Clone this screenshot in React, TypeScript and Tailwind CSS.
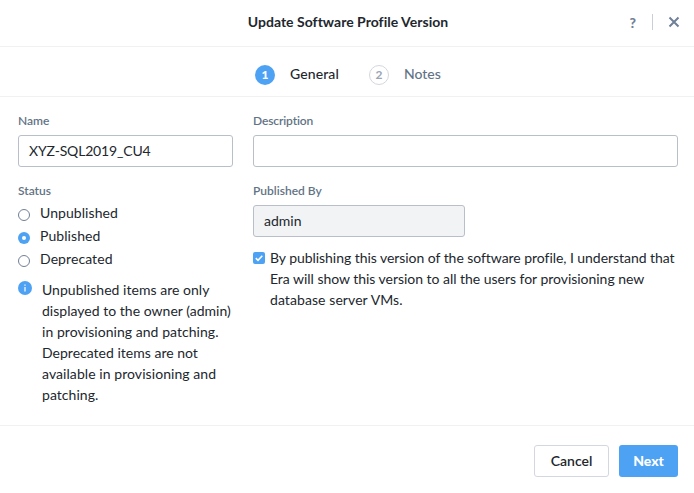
import React from "react";

const statuses = [
  { label: "Unpublished", checked: false, spacing: "tracking-[0.07px]" },
  { label: "Published", checked: true, spacing: "tracking-[0.07px]" },
  { label: "Deprecated", checked: false, spacing: "tracking-[0.08px]" },
];

function Label({ children, className = "" }: { children: React.ReactNode; className?: string }) {
  return (
    <div className={"h-[18px] text-[12px] font-semibold leading-[18px] text-[#627386] " + className}>
      {children}
    </div>
  );
}

function Radio({ checked }: { checked: boolean }) {
  return checked ? (
    <span className="mt-[8px] flex size-3 shrink-0 items-center justify-center rounded-full bg-[#4ea2f4]">
      <span className="size-1 rounded-full bg-white" />
    </span>
  ) : (
    <span className="mt-[8px] size-3 shrink-0 rounded-full border border-[#718096] bg-white" />
  );
}

function Line({ children, className }: { children: React.ReactNode; className: string }) {
  return <span className={"block w-max whitespace-nowrap " + className}>{children}</span>;
}

export default function App() {
  return (
    <div className="flex h-[493px] w-[694px] flex-col overflow-hidden bg-white font-['Lato',sans-serif] text-[14px] text-[#22272e]">
      <header className="flex h-[47px] shrink-0 items-center border-b border-[#f0f1f3] pb-[3px]">
        <div className="w-[120px]" />
        <h1 className="flex-1 pl-[2px] text-center text-[14px] font-bold tracking-[0.02px]">Update Software Profile Version</h1>
        <div className="flex w-[120px] items-center justify-end pr-[14px] pt-px text-[#718096]">
          <span className="pt-px text-[14px] font-black leading-4">?</span>
          <span className="ml-4 h-4 w-px bg-[#c8cfda]" />
          <svg className="ml-[15px]" width="12" height="12" viewBox="0 0 12 12" fill="none" stroke="currentColor" strokeWidth="2">
            <path d="M1.5 1.5 10.5 10.5M10.5 1.5 1.5 10.5" />
          </svg>
        </div>
      </header>

      <nav className="flex h-[50px] shrink-0 items-center border-b border-[#f0f1f3] pl-[255px] pt-[7px]">
        <span className="flex size-5 items-center justify-center rounded-full bg-[#4ea2f4] text-[12px] font-black text-white">1</span>
        <span className="ml-[15px] w-[64px] pb-[3px] font-medium tracking-[0.1px]">General</span>
        <span className="ml-[15px] flex size-5 items-center justify-center rounded-full border border-[#d3d7de] text-[12px] font-bold text-[#9aa5b5]">2</span>
        <span className="ml-[15px] pb-[3px] font-medium text-[#627386]">Notes</span>
      </nav>

      <main className="flex h-[328px] shrink-0 gap-5 px-[18px] pt-[15px]">
        <section className="w-[215px] shrink-0">
          <Label>Name</Label>
          <div className="mt-[5px] flex h-8 items-center rounded-[3px] border border-[#b8bfca] px-[10px] pb-[2px] tracking-[-0.17px]">XYZ-SQL2019_CU4</div>
          <div className="mt-[15px]">
            <Label>Status</Label>
          </div>
          <div className="mt-[1px]">
            {statuses.map((s) => (
              <label key={s.label} className="flex h-[23px] gap-[10px]">
                <Radio checked={s.checked} />
                <span className={"leading-[23px] " + s.spacing}>{s.label}</span>
              </label>
            ))}
          </div>
          <div className="mt-[9px] flex gap-[10px] leading-[21px]">
            <svg className="mt-[2px] shrink-0" width="14" height="14" viewBox="0 0 14 14">
              <circle cx="7" cy="7" r="7" fill="#4ea2f4" />
              <path d="M7 3.5v1.3M7 6v4.5" stroke="white" strokeWidth="1.2" />
            </svg>
            <p>
              <Line className="tracking-[0.03px]">Unpublished items are only</Line>
              <Line className="tracking-[0.02px]">displayed to the owner (admin)</Line>
              <Line className="tracking-[0.05px]">in provisioning and patching.</Line>
              <Line className="tracking-[0.01px]">Deprecated items are not</Line>
              <Line className="tracking-[0.07px]">available in provisioning and</Line>
              <Line className="tracking-[0.05px]">patching.</Line>
            </p>
          </div>
        </section>

        <section className="w-[425px] shrink-0">
          <Label className="tracking-[-0.12px]">Description</Label>
          <div className="mt-[5px] h-8 rounded-[3px] border border-[#b8bfca]" />
          <div className="mt-[15px]">
            <Label>Published By</Label>
          </div>
          <div className="mt-[5px] flex h-8 w-[212px] items-center rounded-[3px] border border-[#b8bfca] bg-[#f2f3f5] px-[10px] pb-[2px]">admin</div>
          <div className="mt-[10px] flex gap-[5px] leading-[21px]">
            <svg className="mt-[5px] shrink-0" width="12" height="12" viewBox="0 0 12 12" fill="none">
              <rect width="12" height="12" rx="2" fill="#4ea2f4" />
              <path d="M2.8 6.2 5 8.3 9.3 3.7" stroke="white" strokeWidth="1.6" />
            </svg>
            <p>
              <Line className="tracking-[-0.05px]">By publishing this version of the software profile, I understand that</Line>
              <Line className="tracking-[-0.03px]">Era will show this version to all the users for provisioning new</Line>
              <Line className="tracking-[0.08px]">database server VMs.</Line>
            </p>
          </div>
        </section>
      </main>

      <footer className="flex h-[68px] shrink-0 justify-end gap-[10px] border-t border-[#f0f1f3] pr-4 pt-[19px]">
        <button className="h-8 w-[75px] rounded-[3px] border border-[#d3d7e0] pb-[2px] font-semibold">Cancel</button>
        <button className="h-8 w-[59px] rounded-[3px] bg-[#4ea2f4] pb-[2px] font-black text-white">Next</button>
      </footer>
    </div>
  );
}
